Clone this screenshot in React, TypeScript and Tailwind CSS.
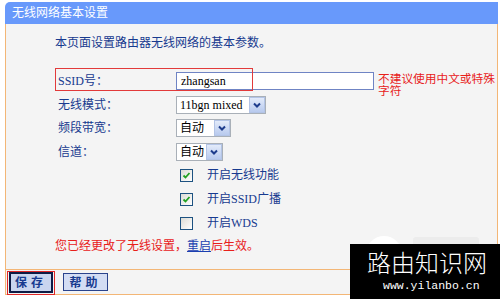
import React from 'react';

const serif = "font-['Liberation_Serif','Noto_Sans_CJK_SC',serif]";

function Chevron() {
  return (
    <svg width="10" height="8" viewBox="0 0 10 8">
      <path d="M2 2.5 L5 5.5 L8 2.5" fill="none" stroke="#1d3c8c" strokeWidth="2" />
    </svg>
  );
}

function Select({ value, className }: { value: string; className: string }) {
  return (
    <div className={`flex h-[18px] items-stretch border border-[#a9b0b8] bg-white ${className}`}>
      <span className="flex-1 overflow-hidden whitespace-nowrap pl-[3px] leading-[16px] text-black">{value}</span>
      <span className="flex w-[16px] items-center justify-center border border-[#b3c4e6] bg-gradient-to-b from-[#e3ebfa] to-[#b8caee]">
        <Chevron />
      </span>
    </div>
  );
}

function Check({ on, label }: { on: boolean; label: string }) {
  return (
    <div className="flex h-[24px] items-center pl-[125px]">
      <span className="flex h-[13px] w-[13px] items-center justify-center border border-[#1d5281] bg-gradient-to-br from-[#dcdcd6] to-white">
        {on && (
          <svg width="9" height="9" viewBox="0 0 9 9">
            <path d="M1.5 4.5 L3.5 6.5 L7.5 2" fill="none" stroke="#21a121" strokeWidth="1.8" />
          </svg>
        )}
      </span>
      <span className="ml-[14px] text-[#173a8f]">{label}</span>
    </div>
  );
}

export default function App() {
  return (
    <div className={`relative h-[299px] w-[500px] overflow-hidden bg-white text-[12px] ${serif}`}>
      <div className="ml-[5px] mt-[2px] w-[493px]">
        <div className="flex h-[22px] items-center rounded-tl-[5px] bg-[#6899fb] pl-[7px] text-white">
          无线网络基本设置
        </div>

        <div className="h-[245px] border-x border-[#f3b676] bg-[#f4f4f4] pl-[49px] pt-[11px]">
          <p className="leading-[16px] text-[#173a8f]">本页面设置路由器无线网络的基本参数。</p>

          <div className="mt-[18px]">
            <div className="flex h-[24px] items-center">
              <span className="w-[121px] pl-[3px] text-[#173a8f]">SSID号：</span>
              <div className="h-[18px] w-[198px] border border-[#6f84c4] bg-white pl-[4px] leading-[16px] text-black">
                zhangsan
              </div>
              <p className="ml-[4px] mt-[3px] w-[119px] self-start font-['Noto_Sans_CJK_SC',sans-serif] text-[11.7px] leading-[12px] text-[#e8201a]">
                不建议使用中文或特殊字符
              </p>
            </div>

            <div className="flex h-[23px] items-center">
              <span className="w-[121px] pl-[3px] text-[#173a8f]">无线模式：</span>
              <Select value="11bgn mixed" className="w-[90px]" />
            </div>

            <div className="flex h-[24px] items-center">
              <span className="w-[121px] pl-[3px] text-[#173a8f]">频段带宽：</span>
              <Select value="自动" className="w-[55px]" />
            </div>

            <div className="flex h-[23px] items-center">
              <span className="w-[121px] pl-[3px] text-[#173a8f]">信道：</span>
              <Select value="自动" className="w-[47px]" />
            </div>

            <Check on label="开启无线功能" />
            <Check on label="开启SSID广播" />
            <Check on={false} label="开启WDS" />
          </div>

          <p className="mt-[3px] leading-[16px] text-[#e8201a]">
            您已经更改了无线设置，<span className="text-[#1b3fb0] underline">重启</span>后生效。
          </p>
        </div>

        <div className="flex h-[26px] items-center gap-[10px] border border-[#f3b676] bg-[#f4f4f4] pl-[3px]">
          <button className="h-[21px] w-[44px] border-2 border-[#0d1b45] bg-[#c9d5ef] font-bold tracking-[4px] text-[#173a8f]">
            保存
          </button>
          <button className="h-[18px] w-[45px] border border-[#2a438c] bg-[#d3ddf4] font-bold tracking-[4px] text-[#173a8f]">
            帮助
          </button>
        </div>
      </div>

      {/* annotation boxes */}
      <div className="absolute left-[55px] top-[68px] h-[23px] w-[198px] border border-[#e23a3a]" />
      <div className="absolute left-[7px] top-[271px] h-[24px] w-[48px] border border-[#e02828]" />

      {/* faded logo behind the watermark */}
      <div className="absolute left-[366px] top-[236px] h-[36px] w-[36px] rounded-full bg-white" />
      <div className="absolute left-[413px] top-[237px] h-[7px] w-[66px] rounded-t-[3px] bg-[#ececec]" />
      <div className="absolute left-[350px] top-[244px] h-[55px] w-[150px] bg-black pt-[6px]">
        <div className="ml-[17px] font-['Noto_Sans_CJK_SC',sans-serif] text-[24px] font-light leading-[24px] text-white">
          路由知识网
        </div>
        <div className="ml-[33px] mt-[5px] font-['Liberation_Mono',monospace] text-[11.5px] leading-[13px] text-white">
          www.yilanbo.cn
        </div>
      </div>
    </div>
  );
}
